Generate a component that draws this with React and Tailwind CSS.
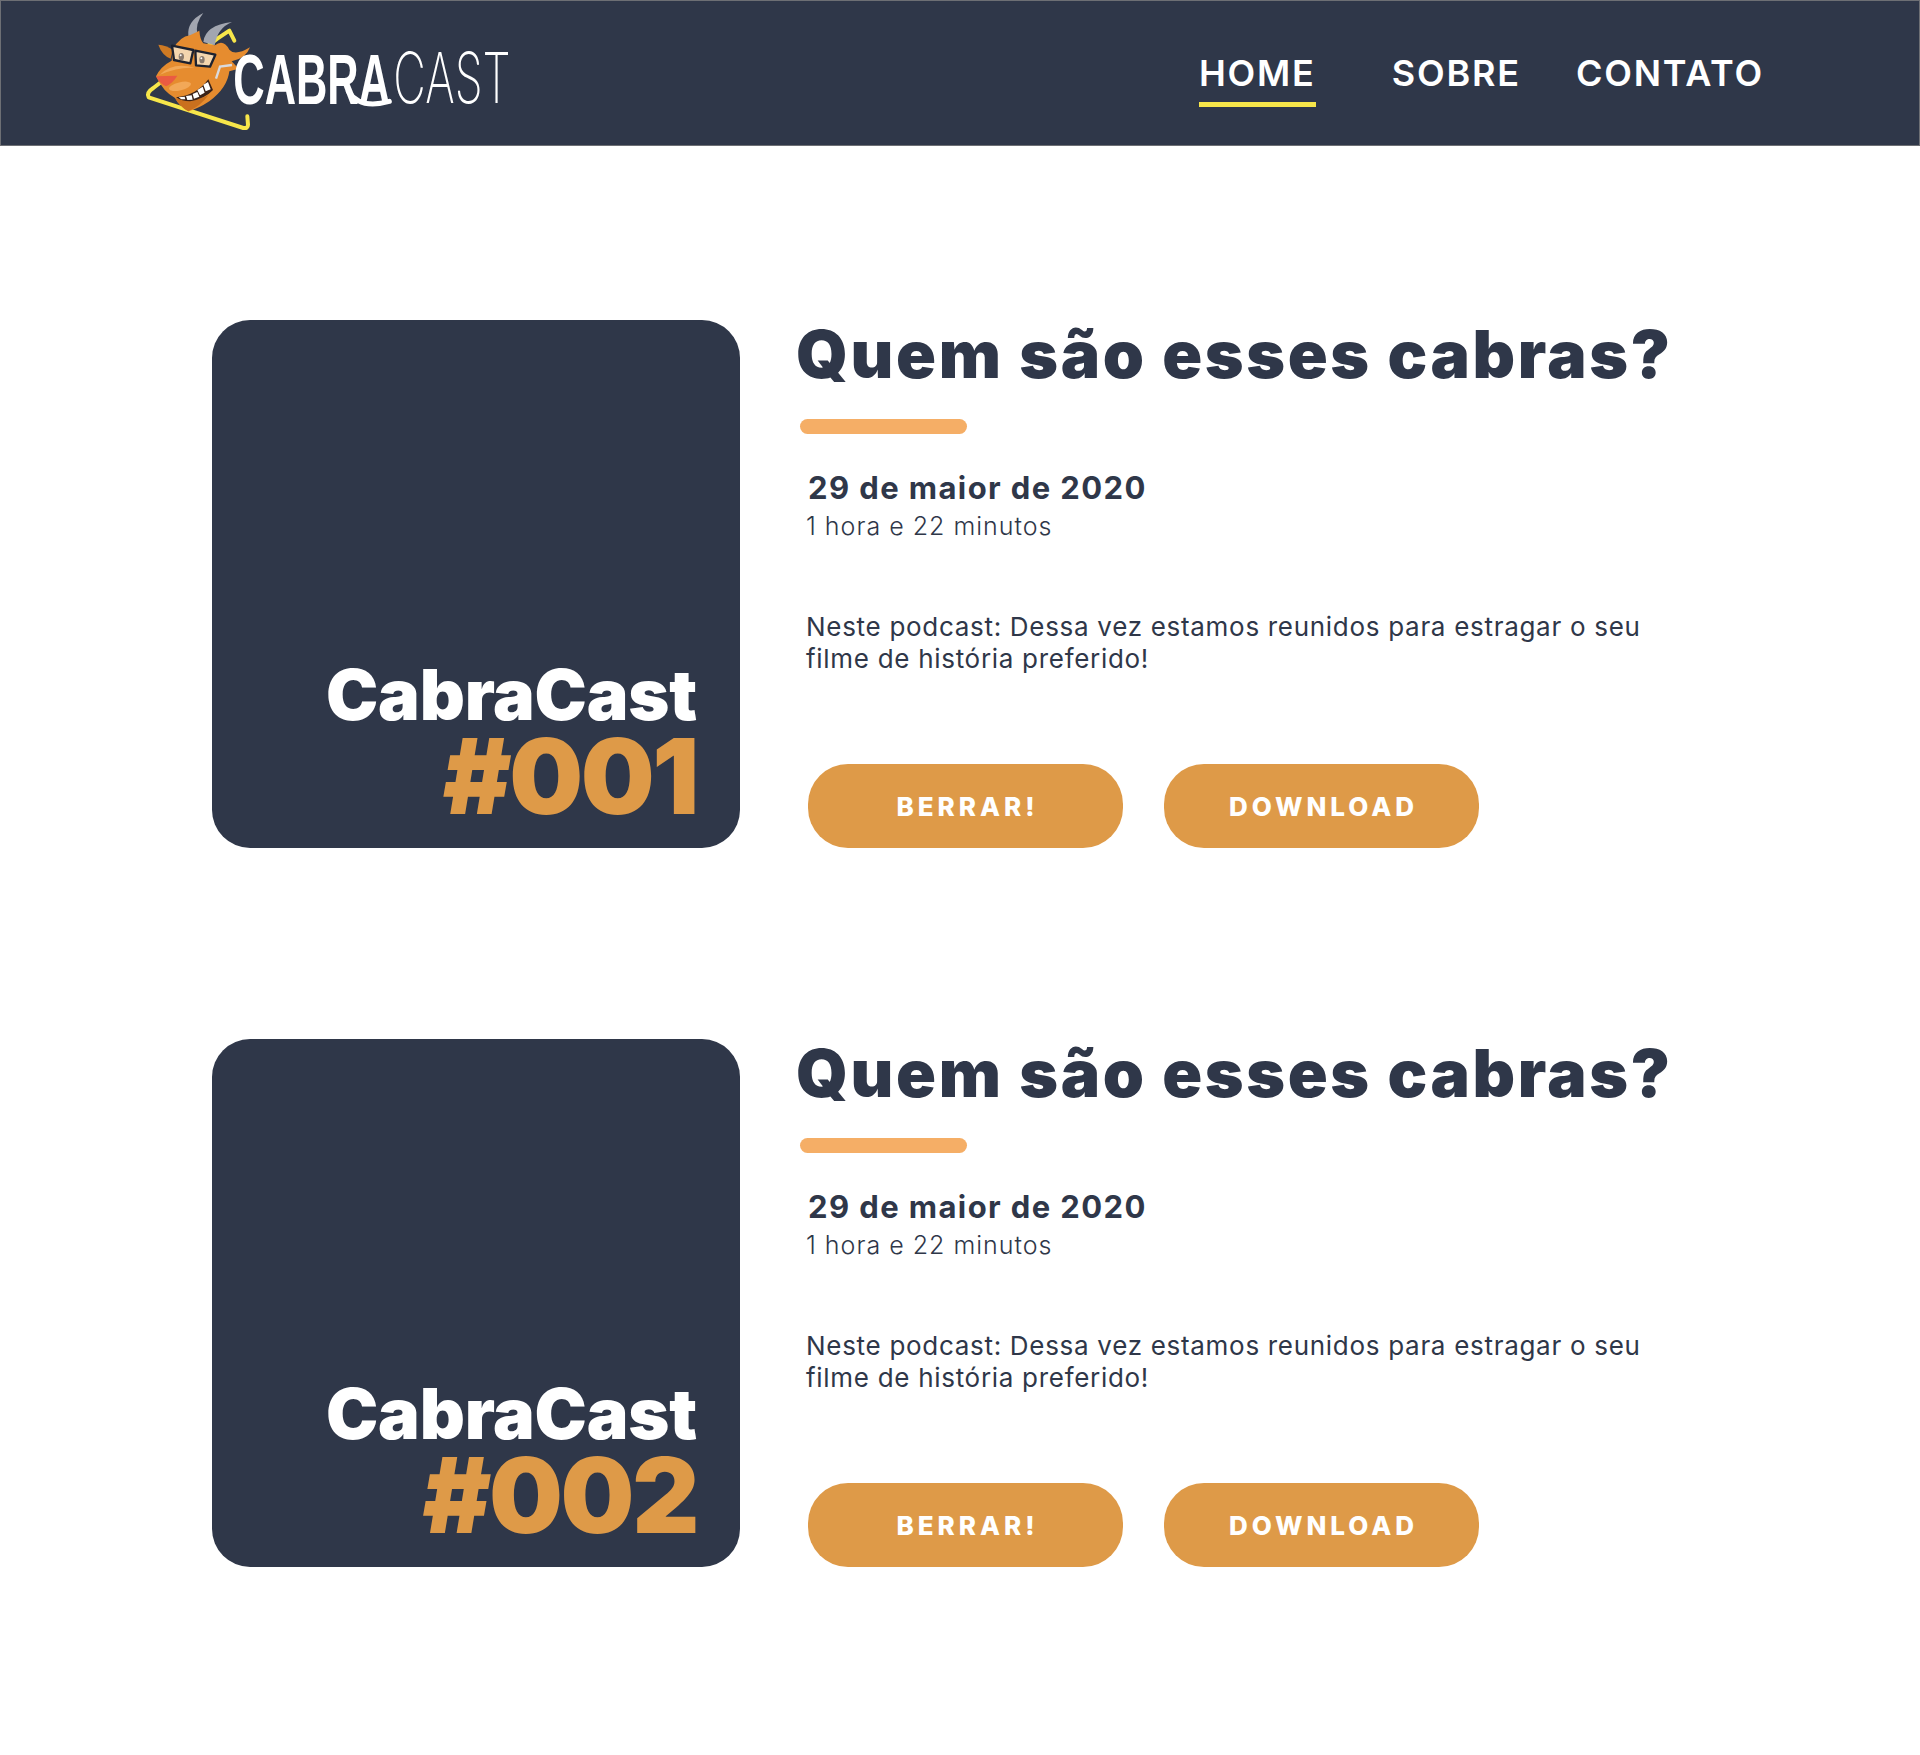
const FONT = { fontFamily: "Inter, 'Noto Sans', sans-serif" };

function Goat() {
  return (
    <g transform="translate(30 30)">
      <path d="M283 98 L268 68 L232 92 L40 240 Q18 254 26 268 L310 360 Q324 362 324 350 L322 325" fill="none" stroke="#f7e64a" strokeWidth="12" strokeLinejoin="round" strokeLinecap="round" />
      <path d="M145 84 Q140 40 190 15 Q165 45 172 82 Z" fill="#a2a6b0" />
      <path d="M190 102 Q195 52 276 42 Q232 60 224 112 Z" fill="#a2a6b0" />
      <path d="M55 110 Q78 112 98 125 L92 152 Q66 142 55 110 Z" fill="#cf7a23" />
      <path d="M98 125 Q120 85 150 82 L178 68 Q180 95 190 106 L225 112 Q250 92 268 125 Q285 145 330 118 Q318 152 275 160 L296 182 L268 190 Q262 240 208 280 Q175 302 145 310 Q118 295 105 270 Q70 252 48 205 Q62 175 95 158 Z" fill="#e68c2f" />
      <path d="M60 200 Q100 160 165 180 Q120 175 60 200 Z" fill="#f2a858" />
      <ellipse cx="120" cy="235" rx="34" ry="12" transform="rotate(-14 120 235)" fill="#f2a858" />
      <path d="M145 310 Q118 295 105 270 Q160 285 205 262 Q180 296 145 310 Z" fill="#c9701e" />
      <path d="M108 268 Q170 262 205 214 L219 246 Q195 272 150 280 Q125 280 108 268 Z" fill="#3a2218" />
      <path d="M116 268 L134 266 L136 274 L124 274 Z M138 264 L155 262 L158 275 L142 276 Z M158 258 L172 252 L178 266 L162 272 Z M172 246 L188 236 L194 254 L180 262 Z M190 230 L204 222 L212 244 L197 250 Z" fill="#fff" />
      <path d="M48 205 L112 203 Q98 226 78 235 Q58 226 48 205 Z" fill="#ea5b42" />
      <path d="M228 212 L240 176 L276 171" fill="none" stroke="#d9dade" strokeWidth="7" />
      <path d="M96 113 L160 126 L151 166 L102 156 Z" fill="#f4d6ae" stroke="#1d2230" strokeWidth="7" strokeLinejoin="round" />
      <path d="M166 128 L226 140 L210 176 L168 172 Z" fill="#f4d6ae" stroke="#1d2230" strokeWidth="7" strokeLinejoin="round" />
      <ellipse cx="124" cy="146" rx="8" ry="11" fill="#8a7a6c" />
      <ellipse cx="186" cy="155" rx="8" ry="11" fill="#8a7a6c" />
      <circle cx="122" cy="142" r="3" fill="#fff" />
      <circle cx="184" cy="151" r="3" fill="#fff" />
    </g>
  );
}

function Logo() {
  return (
    <svg width="400" height="150" viewBox="0 0 1200 450" className="shrink-0">
      <Goat />
      <text x="310" y="318" textLength="470" lengthAdjust="spacingAndGlyphs" fill="#fff" fontSize="210" fontWeight="800" fontFamily="'Liberation Sans', sans-serif">CABRA</text>
      <path d="M655 280 Q690 335 778 310" fill="none" stroke="#fff" strokeWidth="15" strokeLinecap="round" />
      <text x="790" y="316" textLength="352" lengthAdjust="spacingAndGlyphs" fill="#fff" fontSize="210" fontWeight="200" fontFamily="Inter, sans-serif">CAST</text>
    </svg>
  );
}

function Episode({ numero }) {
  return (
    <article className="flex">
      <div className="w-[528px] h-[528px] rounded-[38px] bg-[#2f3749] flex flex-col items-end justify-end pr-[43px] pb-[26px] shrink-0">
        <p className="text-[70px] leading-[70px] font-black text-white tracking-[-0.2px]">CabraCast</p>
        <p className="text-[104px] leading-[92px] font-black text-[#de9a48] tracking-[-2.4px]">#{numero}</p>
      </div>

      <div className="ml-[56px] flex flex-col">
        <h2 className="text-[66px] leading-[68px] font-black text-[#2f3749] tracking-[2.6px] whitespace-nowrap">Quem são esses cabras?</h2>
        <div className="mt-[31px] ml-[4px] w-[167px] h-[15px] rounded-full bg-[#f5ae66]" />
        <p className="mt-[34px] ml-[12px] text-[31px] leading-[40px] font-bold text-[#2f3749] tracking-[1.4px]">29 de maior de 2020</p>
        <p className="ml-[10px] text-[25px] leading-[36px] font-light text-[#2f3749] tracking-[1px]">1 hora e 22 minutos</p>
        <p className="mt-[67px] ml-[10px] w-[860px] text-[26px] leading-[32px] text-[#2f3749] tracking-[0.7px]">
          Neste podcast: Dessa vez estamos reunidos para estragar o seu filme de história preferido!
        </p>
        <div className="mt-auto ml-[12px] flex gap-[41px]">
          <button className="w-[315px] h-[84px] pl-[4px] rounded-[40px] bg-[#de9a48] text-white text-[26px] font-extrabold tracking-[4px]">BERRAR!</button>
          <button className="w-[315px] h-[84px] pl-[4px] rounded-[40px] bg-[#de9a48] text-white text-[26px] font-extrabold tracking-[4px]">DOWNLOAD</button>
        </div>
      </div>
    </article>
  );
}

export default function App() {
  return (
    <div className="min-h-[1755px] bg-white" style={FONT}>
      <header className="h-[146px] bg-[#2f3749] border border-[#6d6f74] flex items-center justify-between pl-[129px] pr-[155px]">
        <Logo />
        <nav className="mt-[12px] flex items-start text-[36px] leading-[44px] font-semibold text-white tracking-[1.8px]">
          <a className="w-[117px] border-b-[5px] border-[#f7e64a] pb-[7px] mr-[76px] text-center whitespace-nowrap">HOME</a>
          <a className="mr-[55px]">SOBRE</a>
          <a>CONTATO</a>
        </nav>
      </header>

      <main className="pt-[174px] pl-[212px] flex flex-col gap-[191px]">
        <Episode numero="001" />
        <Episode numero="002" />
      </main>
    </div>
  );
}
